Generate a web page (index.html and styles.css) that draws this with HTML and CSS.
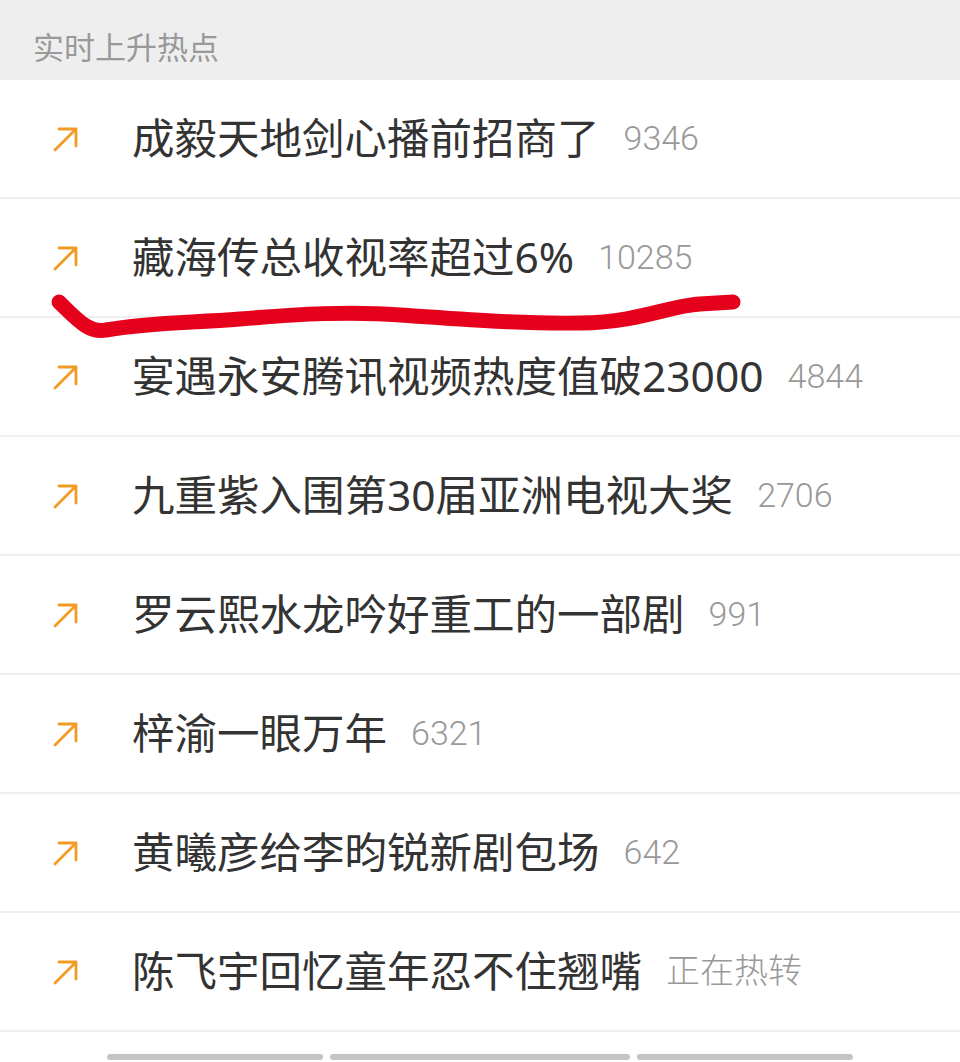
FILE: index.html
```html
<!DOCTYPE html>
<html lang="zh-CN">
<head>
  <meta charset="UTF-8" />
  <meta name="viewport" content="width=device-width, initial-scale=1.0"/>
  <title>实时上升热点</title>
  <link rel="stylesheet" href="styles.css">
</head>

<body>

  <!-- Section title -->
  <div class="section-head">实时上升热点</div>

  <!-- Rising hot topics list -->
  <ul class="hot-list">
    <li class="hot-row">
      <svg class="rise-icon" viewBox="0 0 26 26"><path d="M2 24 L23 3 M6 3 H23 V20"/></svg>
      <span class="hot-title">成毅天地剑心播前招商了</span>
      <span class="hot-count">9346</span>
    </li>
    <li class="hot-row">
      <svg class="rise-icon" viewBox="0 0 26 26"><path d="M2 24 L23 3 M6 3 H23 V20"/></svg>
      <span class="hot-title">藏海传总收视率超过6%</span>
      <span class="hot-count">10285</span>
    </li>
    <li class="hot-row">
      <svg class="rise-icon" viewBox="0 0 26 26"><path d="M2 24 L23 3 M6 3 H23 V20"/></svg>
      <span class="hot-title">宴遇永安腾讯视频热度值破23000</span>
      <span class="hot-count">4844</span>
    </li>
    <li class="hot-row">
      <svg class="rise-icon" viewBox="0 0 26 26"><path d="M2 24 L23 3 M6 3 H23 V20"/></svg>
      <span class="hot-title">九重紫入围第30届亚洲电视大奖</span>
      <span class="hot-count">2706</span>
    </li>
    <li class="hot-row">
      <svg class="rise-icon" viewBox="0 0 26 26"><path d="M2 24 L23 3 M6 3 H23 V20"/></svg>
      <span class="hot-title">罗云熙水龙吟好重工的一部剧</span>
      <span class="hot-count">991</span>
    </li>
    <li class="hot-row">
      <svg class="rise-icon" viewBox="0 0 26 26"><path d="M2 24 L23 3 M6 3 H23 V20"/></svg>
      <span class="hot-title">梓渝一眼万年</span>
      <span class="hot-count">6321</span>
    </li>
    <li class="hot-row">
      <svg class="rise-icon" viewBox="0 0 26 26"><path d="M2 24 L23 3 M6 3 H23 V20"/></svg>
      <span class="hot-title">黄曦彦给李昀锐新剧包场</span>
      <span class="hot-count">642</span>
    </li>
    <li class="hot-row">
      <svg class="rise-icon" viewBox="0 0 26 26"><path d="M2 24 L23 3 M6 3 H23 V20"/></svg>
      <span class="hot-title">陈飞宇回忆童年忍不住翘嘴</span>
      <span class="hot-count">正在热转</span>
    </li>
  </ul>

  <!-- Loading placeholder bars at the bottom -->
  <div class="skeleton">
    <span class="bar short"></span>
    <span class="bar long"></span>
    <span class="bar short"></span>
  </div>

  <!-- Hand-drawn red marker stroke over the second row -->
  <svg class="marker" viewBox="0 0 960 1062">
    <path d="M59 302 C74 316 88 334 106 330 C150 322 190 323 240 319 C300 314 350 311 400 315 C460 319 520 324 580 323 C640 322 668 306 700 304 L733 302"/>
  </svg>

</body>
</html>
```

FILE: styles.css
```css
/* Base page */
* { box-sizing: border-box; }
body {
  margin: 0;
  background: #fff;
  font-family: "Noto Sans", "Noto Sans CJK SC", sans-serif;
  color: #333;
}

/* Grey section header */
.section-head {
  height: 80px;
  background: #eeeeee;
  color: #999;
  font-size: 31px;
  line-height: 1;
  padding: 32px 0 0 33px;
}

/* List rows */
.hot-list {
  list-style: none;
  margin: 0;
  padding: 0;
}

.hot-row {
  display: flex;
  align-items: center;
  height: 119px;
  border-bottom: 2px solid #efefef;
  padding: 0 0 1px 53px;
}

.rise-icon {
  width: 26px;
  height: 26px;
  flex-shrink: 0;
  margin-right: 53px;
  margin-top: 1px;
}

.rise-icon path {
  fill: none;
  stroke: #f29b24;
  stroke-width: 2.8;
  stroke-linecap: round;
  stroke-linejoin: round;
}

.hot-title {
  font-size: 42.5px;
  line-height: 1;
  color: #333;
}

.hot-count {
  font-family: Roboto, "Noto Sans CJK SC", sans-serif;
  font-size: 34px;
  line-height: 1;
  font-weight: 300;
  color: #999;
  margin-left: 24px;
}

/* Bottom skeleton bars */
.skeleton {
  display: flex;
  gap: 7px;
  padding: 22px 0 0 107px;
}

.bar {
  height: 6px;
  border-radius: 3px;
  background: #c4c4c4;
}

.bar.short { width: 216px; }
.bar.long { width: 300px; }

/* Red marker overlay */
.marker {
  position: absolute;
  left: 0;
  top: 0;
  width: 960px;
  height: 1062px;
  pointer-events: none;
}

.marker path {
  fill: none;
  stroke: #e5001c;
  stroke-width: 15;
  stroke-linecap: round;
  stroke-linejoin: round;
}
```
